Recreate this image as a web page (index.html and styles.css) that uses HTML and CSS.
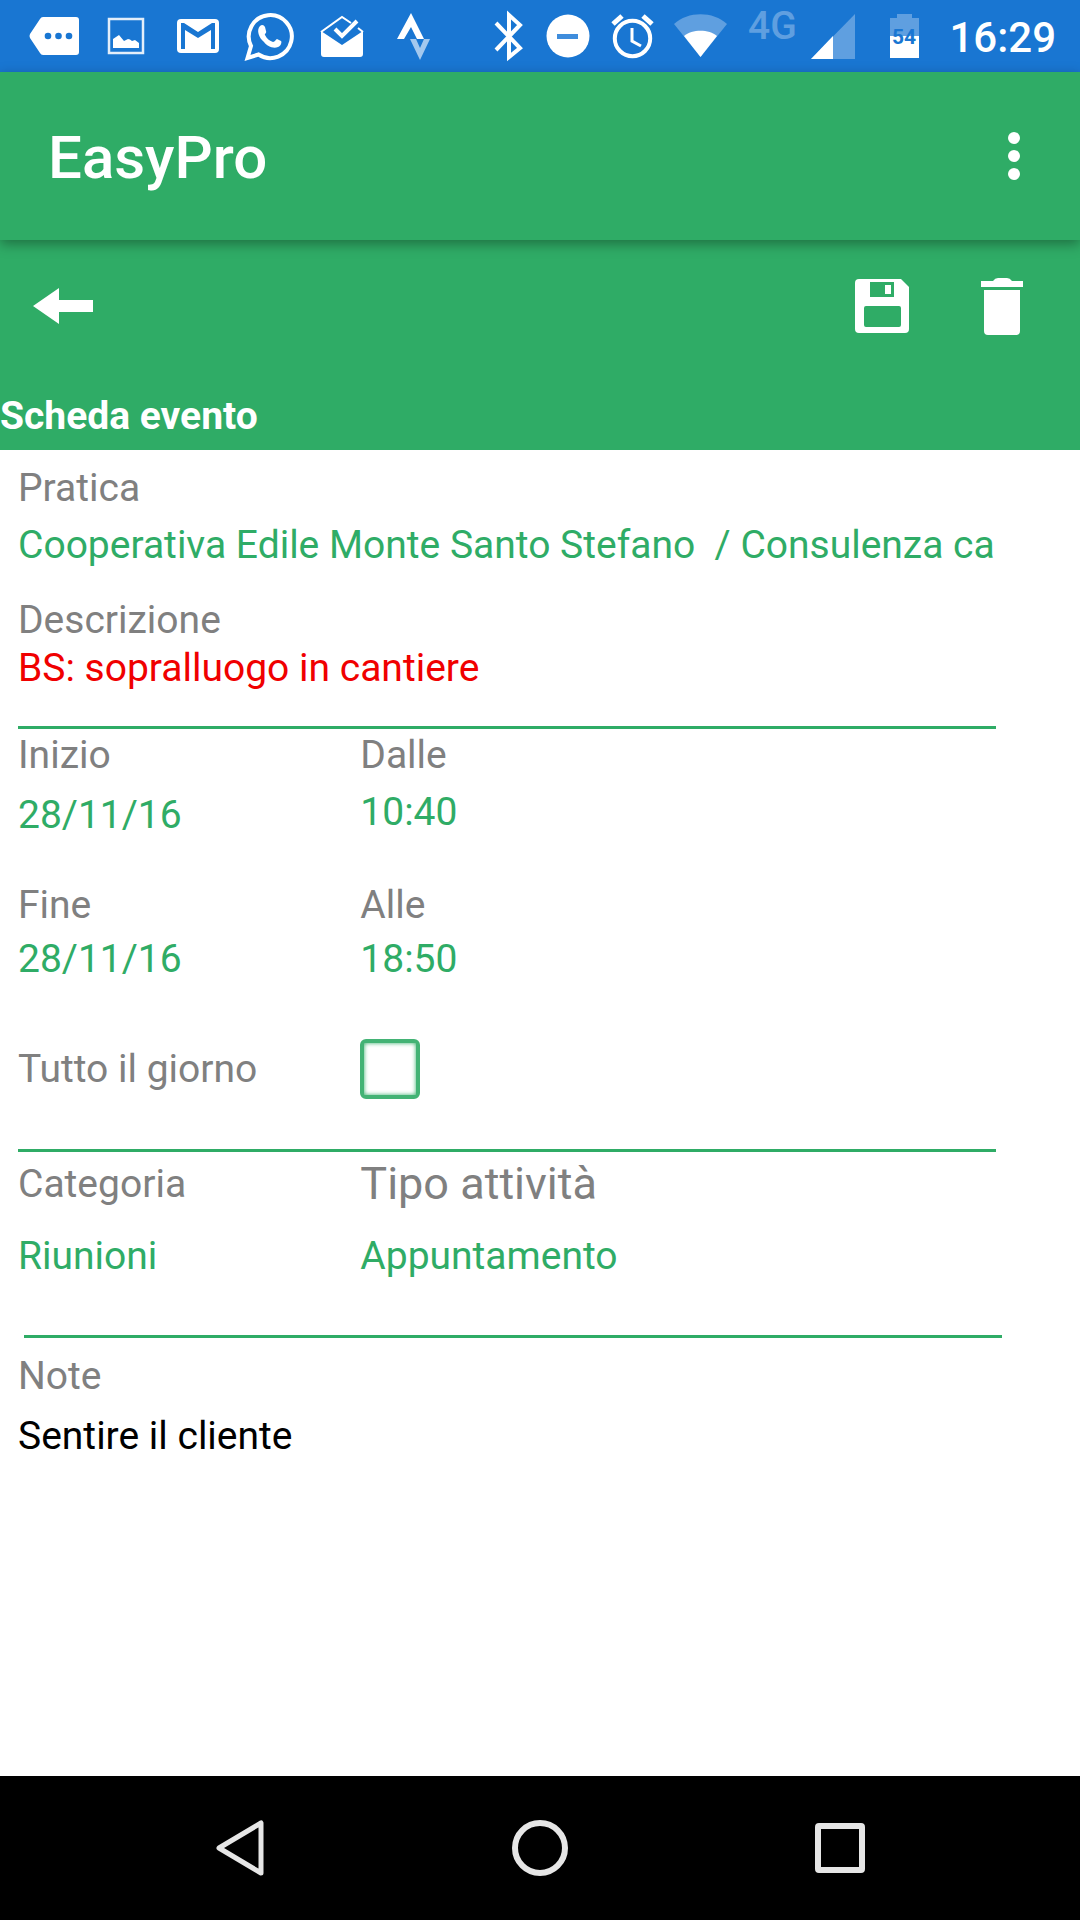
FILE: index.html
```html
<!DOCTYPE html>
<html lang="it">
<head>
    <meta charset="UTF-8">
    <meta name="viewport" content="width=device-width, initial-scale=1.0">
    <title>EasyPro</title>
    <link rel="stylesheet" href="styles.css">
</head>
<body>
    <div class="status-bar">
        <div class="notifications">
            <svg width="72" height="72" viewBox="0 0 72 72">
                <path d="M25 17H58a3 3 0 0 1 3 3V52a3 3 0 0 1-3 3H25q-2 0-3-2L12 38q-1-2 0-4L22 19q1-2 3-2z" fill="#fff"/>
                <g fill="#1976d2"><circle cx="30" cy="36" r="3.3"/><circle cx="40.5" cy="36" r="3.3"/><circle cx="51" cy="36" r="3.3"/></g>
            </svg>
            <svg width="72" height="72" viewBox="0 0 72 72">
                <rect x="19" y="19" width="34" height="34" fill="none" stroke="#e3eefa" stroke-width="2.5"/>
                <path d="M23 48V39l6-4 5 6 4-2q2 0 4 2l3-1 4 3v5z" fill="#fff"/>
            </svg>
            <svg width="72" height="72" viewBox="0 0 72 72">
                <rect x="15" y="19" width="42" height="34" rx="4" fill="#fff"/>
                <path d="M19 23h3l14 9 14-9h3v26h-4V30l-13 8-13-8v19h-4z" fill="#1976d2"/>
            </svg>
            <svg width="72" height="72" viewBox="0 0 72 72">
                <path d="M13.5 58l3.5-12A21.5 21.5 0 1 1 24.5 54.5z" fill="none" stroke="#fff" stroke-width="4"/>
                <path d="M26 26c2-2 4-1 5 1l1 4c1 2-2 3-1 4 2 4 5 6 8 7 2 0 3-3 4-3l4 2c1 1 0 5-3 6-5 2-11-1-14-5-5-4-8-12-4-16z" fill="#fff"/>
            </svg>
            <svg width="72" height="72" viewBox="0 0 72 72">
                <path d="M15 31l21 14 21-14v23a3 3 0 0 1-3 3H18a3 3 0 0 1-3-3z" fill="#fff"/>
                <path d="M15 32L36 17l9 6M52 28l5 4" fill="none" stroke="#fff" stroke-width="2"/>
                <path d="M29 29l7 7L51 21" fill="none" stroke="#fff" stroke-width="4"/>
            </svg>
            <svg width="72" height="72" viewBox="0 0 72 72">
                <path d="M33 13l13 26h-7l-6-12-7 12h-7z" fill="#fff"/>
                <path d="M32 39h6l4 9 4-9h6L42 60z" fill="#a3c8ee"/>
            </svg>
        </div>
        <div class="system">
            <svg width="60" height="72" viewBox="0 0 60 72">
                <path d="M18 23l24 25-11 9V15l11 10-24 25" fill="none" stroke="#fff" stroke-width="4"/>
            </svg>
            <svg width="60" height="72" viewBox="0 0 60 72">
                <circle cx="30" cy="36" r="21.5" fill="#fff"/>
                <rect x="19" y="34" width="21" height="5" fill="#3f8ddc"/>
            </svg>
            <svg width="68" height="72" viewBox="0 0 68 72">
                <circle cx="34.5" cy="38.5" r="17.7" fill="none" stroke="#fff" stroke-width="4"/>
                <path d="M15 24l9-8M45 16l9 8" stroke="#fff" stroke-width="5"/>
                <path d="M34 28v13l9 5" fill="none" stroke="#fff" stroke-width="3"/>
            </svg>
            <svg width="68" height="72" viewBox="0 0 68 72">
                <path d="M34.5 57L8 24C22 11 47 11 61 24z" fill="#5f9fe0"/>
                <path d="M34.5 57L18 36C26 29 43 29 51 36z" fill="#fff"/>
            </svg>
            <svg width="134" height="72" viewBox="0 0 134 72">
                <text x="14" y="39" class="network">4G</text>
                <path d="M77 59L121 14V59z" fill="#5f9fe0"/>
                <path d="M77 59L99 36V59z" fill="#fff"/>
            </svg>
            <svg width="72" height="72" viewBox="0 0 72 72">
                <path d="M29 14H44V18H51V36H22V18H29z" fill="#5f9fe0"/>
                <rect x="22" y="36" width="29" height="22" fill="#fff"/>
                <text x="36" y="44" class="battery">54</text>
            </svg>
            <time class="clock">16:29</time>
        </div>
    </div>

    <header class="app-bar">
        <h1>EasyPro</h1>
        <button type="button" class="menu" aria-label="Menu">
            <svg width="12" height="48" viewBox="0 0 12 48" fill="#fff">
                <circle cx="6" cy="6" r="6"/><circle cx="6" cy="24" r="6"/><circle cx="6" cy="42" r="6"/>
            </svg>
        </button>
    </header>

    <div class="toolbar">
        <div class="actions">
            <button type="button" class="back" aria-label="Indietro">
                <svg width="60" height="36" viewBox="0 0 60 36" fill="#fff">
                    <path d="M0 18L26 0V12H60V24H26V36z"/>
                </svg>
            </button>
            <button type="button" class="action" aria-label="Salva">
                <svg width="54" height="54" viewBox="0 0 54 54">
                    <path d="M4 0H46L54 8V50a4 4 0 0 1-4 4H4a4 4 0 0 1-4-4V4a4 4 0 0 1 4-4z" fill="#fff"/>
                    <path d="M15 3H39V18H15zM11 27H44a2 2 0 0 1 2 2V46a2 2 0 0 1-2 2H11a2 2 0 0 1-2-2V29a2 2 0 0 1 2-2z" fill="#2fac66"/>
                    <rect x="30" y="6" width="6" height="9" fill="#fff"/>
                </svg>
            </button>
            <button type="button" class="action" aria-label="Elimina">
                <svg width="42" height="58" viewBox="0 0 42 58" fill="#fff">
                    <path d="M0 4H12Q14 1 17 1H26Q29 1 31 4H42V10H0zM3 13H39V54a4 4 0 0 1-4 4H7a4 4 0 0 1-4-4z"/>
                </svg>
            </button>
        </div>
        <h2>Scheda evento</h2>
    </div>

    <main>
        <form class="event">
            <div class="field medium">
                <label for="pratica">Pratica</label>
                <input type="text" id="pratica" value="Cooperativa Edile Monte Santo Stefano  / Consulenza ca">
            </div>
            <div class="field description">
                <label for="descrizione">Descrizione</label>
                <input type="text" id="descrizione" class="alert" value="BS: sopralluogo in cantiere">
            </div>

            <hr>

            <div class="row start">
                <div class="field large">
                    <label for="inizio">Inizio</label>
                    <input type="text" id="inizio" value="28/11/16">
                </div>
                <div class="field medium">
                    <label for="dalle">Dalle</label>
                    <input type="text" id="dalle" value="10:40">
                </div>
            </div>
            <div class="row end">
                <div class="field small">
                    <label for="fine">Fine</label>
                    <input type="text" id="fine" value="28/11/16">
                </div>
                <div class="field small">
                    <label for="alle">Alle</label>
                    <input type="text" id="alle" value="18:50">
                </div>
            </div>
            <div class="row all-day">
                <label for="giorno">Tutto il giorno</label>
                <input type="checkbox" id="giorno">
            </div>

            <hr>

            <div class="row category">
                <div class="field wide">
                    <label for="categoria">Categoria</label>
                    <select id="categoria"><option>Riunioni</option></select>
                </div>
                <div class="field wide">
                    <label for="tipo" class="big">Tipo attività</label>
                    <select id="tipo"><option>Appuntamento</option></select>
                </div>
            </div>

            <hr class="inset">

            <div class="field large notes">
                <label for="note">Note</label>
                <textarea id="note" rows="4">Sentire il cliente</textarea>
            </div>
        </form>
    </main>

    <nav class="nav-bar">
        <button type="button" aria-label="Back">
            <svg width="50" height="58" viewBox="0 0 50 58">
                <path d="M46 4V54L4 29z" fill="none" stroke="#e6e6e6" stroke-width="5" stroke-linejoin="round"/>
            </svg>
        </button>
        <button type="button" aria-label="Home">
            <svg width="56" height="56" viewBox="0 0 56 56">
                <circle cx="28" cy="28" r="25" fill="none" stroke="#e6e6e6" stroke-width="6"/>
            </svg>
        </button>
        <button type="button" aria-label="Recenti">
            <svg width="50" height="50" viewBox="0 0 50 50">
                <rect x="3" y="3" width="44" height="44" rx="1" fill="none" stroke="#e6e6e6" stroke-width="6" stroke-linejoin="round"/>
            </svg>
        </button>
    </nav>
</body>
</html>
```

FILE: styles.css
```css
* {
    box-sizing: border-box;
}

body {
    margin: 0;
    min-height: 100vh;
    display: flex;
    flex-direction: column;
    background-color: #fff;
    font-family: Roboto, sans-serif;
    font-size: 39px;
    line-height: 48px;
}

svg {
    display: block;
}

button {
    display: flex;
    align-items: center;
    justify-content: center;
    padding: 0;
    border: 0;
    background: none;
    cursor: pointer;
}

/* Status bar */
.status-bar {
    display: flex;
    justify-content: space-between;
    height: 72px;
    padding: 0 24px 0 18px;
    background-color: #1976d2;
}

.notifications,
.system {
    display: flex;
    align-items: center;
}

.network {
    font-size: 39px;
    font-weight: 500;
    fill: #5f9fe0;
}

.battery {
    font-size: 21px;
    font-weight: 700;
    text-anchor: middle;
    fill: #1976d2;
}

.clock {
    margin-left: 9px;
    padding-top: 4px;
    color: #fff;
    font-size: 42px;
    font-weight: 500;
}

/* App bar */
.app-bar {
    position: relative;
    display: flex;
    align-items: center;
    justify-content: space-between;
    height: 168px;
    padding: 0 18px 0 48px;
    background-color: #2fac66;
    box-shadow: 0 4px 12px rgba(0, 0, 0, 0.35);
}

h1,
h2 {
    margin: 0;
    color: #fff;
}

h1 {
    padding-top: 4px;
    font-size: 60px;
    line-height: 72px;
    font-weight: 500;
}

.menu {
    width: 96px;
    height: 96px;
}

/* Toolbar */
.toolbar {
    padding-bottom: 10px;
    background-color: #2fac66;
}

.actions {
    display: flex;
    height: 132px;
    margin-bottom: 20px;
    padding: 0 18px;
}

.back {
    width: 90px;
    margin-right: auto;
}

.action {
    width: 120px;
}

h2 {
    font-size: 39px;
    font-weight: 700;
}

/* Event form */
main {
    flex: 1;
    padding: 14px 84px 0 18px;
}

.field {
    display: flex;
    flex-direction: column;
}

.small {
    gap: 6px;
}

.medium {
    gap: 9px;
}

.large {
    gap: 12px;
}

.wide {
    gap: 24px;
}

.row {
    display: grid;
    grid-template-columns: 35% 1fr;
}

.description {
    margin: 27px 0 34px;
}

.end {
    margin: 42px 0 56px;
}

.all-day {
    align-items: center;
    margin-bottom: 50px;
}

.category {
    padding-top: 6px;
    margin-bottom: 55px;
}

.notes {
    padding-top: 12px;
}

label {
    color: #808080;
}

.big {
    font-size: 45px;
}

input,
select,
textarea {
    width: 100%;
    height: 48px;
    margin: 0;
    padding: 0;
    border: 0;
    outline: 0;
    background: none;
    color: #2fac66;
    font: inherit;
    appearance: none;
}

.alert {
    color: #f00000;
}

textarea {
    height: auto;
    color: #000;
    resize: none;
}

input[type="checkbox"] {
    width: 60px;
    height: 60px;
    border: 4px solid #43b375;
    border-radius: 6px;
    box-shadow: inset 0 0 4px #2fac66;
}

input[type="checkbox"]:checked {
    background-color: #2fac66;
}

hr {
    height: 3px;
    margin: 0 0 2px;
    border: 0;
    background-color: #2fac66;
}

.inset {
    margin-left: 6px;
    margin-right: -6px;
}

/* Navigation bar */
.nav-bar {
    display: flex;
    justify-content: space-around;
    height: 144px;
    padding: 0 90px;
    background-color: #000;
}

.nav-bar button {
    flex: 1;
}
```
